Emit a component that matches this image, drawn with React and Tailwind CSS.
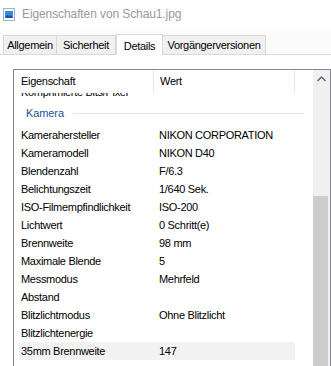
import React from 'react';

const font = { fontFamily: '"Liberation Sans", Arial, sans-serif' };

const rows = [
    ['Kamerahersteller', 'NIKON CORPORATION'],
    ['Kameramodell', 'NIKON D40'],
    ['Blendenzahl', 'F/6.3'],
    ['Belichtungszeit', '1/640 Sek.'],
    ['ISO-Filmempfindlichkeit', 'ISO-200'],
    ['Lichtwert', '0 Schritt(e)'],
    ['Brennweite', '98 mm'],
    ['Maximale Blende', '5'],
    ['Messmodus', 'Mehrfeld'],
    ['Abstand', ''],
    ['Blitzlichtmodus', 'Ohne Blitzlicht'],
    ['Blitzlichtenergie', ''],
    ['35mm Brennweite', '147'],
];

const tabs = [
    { label: 'Allgemein', w: 'w-[54px]' },
    { label: 'Sicherheit', w: 'w-[60px]' },
    { label: 'Details', w: 'w-[47px]', active: true },
    { label: 'Vorgängerversionen', w: 'w-[104px]' },
];

const FileIcon = () => (
    <svg width="12" height="13" viewBox="0 0 12 13">
        <rect x="0.5" y="0.5" width="11" height="12" fill="#fff" stroke="#9bb4d0" />
        <rect x="2" y="3" width="8" height="7" fill="#3c8ad8" />
        <path d="M2 10 L4.5 6.5 L6.5 8.5 L8 7 L10 10 Z" fill="#1b4f9c" />
    </svg>
);

const Row = ({ name, value, highlight }) => (
    <div className={`ml-[5px] w-[276px] h-[18px] flex items-center ${highlight ? 'bg-[#f2f2f2]' : ''}`}>
        <div className="w-[140px] pl-[2px] whitespace-nowrap">{name}</div>
        <div className="flex-1 whitespace-nowrap">{value}</div>
    </div>
);

export default function App() {
    return (
        <div
            className="w-[331px] h-[366px] overflow-hidden bg-white text-[11px] tracking-[-0.3px] text-black"
            style={font}
        >
            {/* title bar */}
            <div className="h-[28px] flex items-center pl-[3px] gap-[7px]">
                <FileIcon />
                <span className="text-[12px] tracking-[-0.1px] text-[#999]">Eigenschaften von Schau1.jpg</span>
            </div>

            {/* tabs */}
            <div className="h-[27px] bg-[#fbfbfb] flex items-end pl-[3px] border-b border-[#d9d9d9]">
                {tabs.map((t) =>
                    t.active ? (
                        <div
                            key={t.label}
                            className={`${t.w} h-[21px] -mb-px bg-white border border-b-0 border-[#d9d9d9] flex items-start justify-center pt-[3px]`}
                        >
                            {t.label}
                        </div>
                    ) : (
                        <div
                            key={t.label}
                            className={`${t.w} h-[19px] bg-[#f0f0f0] border border-b-0 border-[#d9d9d9] -ml-px first:ml-0 flex items-center justify-center`}
                        >
                            {t.label}
                        </div>
                    )
                )}
            </div>

            {/* panel */}
            <div className="pt-[14px] pl-[13px]">
                <div className="w-[318px] h-[320px] border border-[#828790] flex">
                    <div className="flex-1 flex flex-col">
                        {/* header */}
                        <div className="h-[23px] flex items-center">
                            <div className="w-[139px] pl-[7px] h-full flex items-center">Eigenschaft</div>
                            <div className="w-px h-full bg-[#e5e5e5]" />
                            <div className="w-[140px] pl-[6px] h-full flex items-center">Wert</div>
                            <div className="w-px h-full bg-[#e5e5e5]" />
                        </div>

                        {/* partially scrolled row */}
                        <div className="h-[8px] overflow-hidden">
                            <div className="-mt-[10px]">
                                <Row name="Komprimierte Bits/Pixel" value="" />
                            </div>
                        </div>

                        {/* group header */}
                        <div className="h-[25px] flex items-center pl-[12px] pr-[9px]">
                            <span className="text-[#1f4e99] tracking-[-0.1px]">Kamera</span>
                            <div className="flex-1 h-px bg-[#e5e5e5] ml-[9px]" />
                        </div>

                        {rows.map(([n, v], i) => (
                            <Row key={n} name={n} value={v} highlight={i === rows.length - 1} />
                        ))}
                    </div>

                    {/* scrollbar */}
                    <div className="w-[17px] bg-[#f0f0f0] flex flex-col">
                        <div className="h-[17px] flex items-center justify-center">
                            <svg width="9" height="6" viewBox="0 0 9 6">
                                <path d="M0.5 5 L4.5 1 L8.5 5" fill="none" stroke="#606060" strokeWidth="1.4" />
                            </svg>
                        </div>
                        <div className="h-[109px]" />
                        <div className="flex-1 w-[15px] bg-[#cdcdcd]" />
                    </div>
                </div>
            </div>
        </div>
    );
}
